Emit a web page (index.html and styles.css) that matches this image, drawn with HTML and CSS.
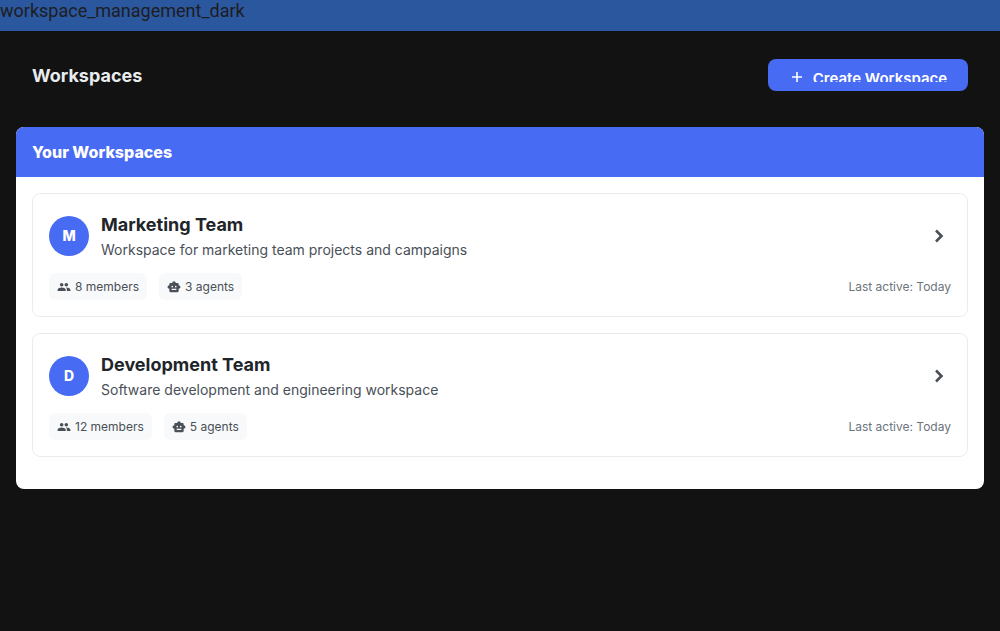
FILE: index.html
```html
<!DOCTYPE html>
<html lang="en">
<head>
<meta charset="utf-8">
<meta name="viewport" content="width=device-width, initial-scale=1">
<title>Workspaces</title>
<link rel="stylesheet" href="styles.css">
</head>
<body>
<svg class="sprite" aria-hidden="true">
  <symbol id="people" viewBox="0 0 24 24"><path d="M16 11c1.66 0 2.99-1.34 2.99-3S17.66 5 16 5c-1.66 0-3 1.34-3 3s1.34 3 3 3zm-8 0c1.66 0 2.99-1.34 2.99-3S9.66 5 8 5C6.34 5 5 6.34 5 8s1.34 3 3 3zm0 2c-2.33 0-7 1.17-7 3.5V19h14v-2.5c0-2.33-4.67-3.5-7-3.5zm8 0c-.29 0-.62.02-.97.05 1.16.84 1.97 1.97 1.97 3.45V19h6v-2.5c0-2.33-4.67-3.5-7-3.5z"/></symbol>
  <symbol id="robot" viewBox="0 0 24 24"><path d="M20 9V7c0-1.1-.9-2-2-2h-3c0-1.66-1.34-3-3-3S9 3.34 9 5H6c-1.1 0-2 .9-2 2v2c-1.66 0-3 1.34-3 3s1.34 3 3 3v4c0 1.1.9 2 2 2h12c1.1 0 2-.9 2-2v-4c1.66 0 3-1.34 3-3s-1.34-3-3-3zM7.5 11.5c0-.83.67-1.5 1.5-1.5s1.5.67 1.5 1.5S9.83 13 9 13s-1.5-.67-1.5-1.5zM16 17H8v-2h8v2zm-1-4c-.83 0-1.500-.67-1.500-1.500S14.170 10 15 10s1.500.67 1.500 1.500S15.830 13 15 13z"/></symbol>
  <symbol id="chevron" viewBox="0 0 24 24"><path d="M9 6.5l5.500 5.500L9 17.500" fill="none" stroke="currentColor" stroke-width="2.600"/></symbol>
  <symbol id="plus" viewBox="0 0 16 16"><path d="M8 3v10M3 8h10" fill="none" stroke="currentColor" stroke-width="1.600"/></symbol>
</svg>
<div class="banner">workspace_management_dark</div>
<main class="page">
  <header class="toolbar">
    <h1 class="toolbar-title">Workspaces</h1>
    <button class="create" type="button"><svg class="create-icon" aria-hidden="true"><use href="#plus"/></svg><span class="create-label">Create Workspace</span></button>
  </header>
  <section class="panel">
    <h2 class="panel-title">Your Workspaces</h2>
    <div class="list">
      <article class="card">
        <div class="card-top">
          <div class="avatar">M</div>
          <div class="info">
            <h3 class="name">Marketing Team</h3>
            <p class="description">Workspace for marketing team projects and campaigns</p>
          </div>
          <button class="open" type="button" aria-label="Open Marketing Team"><svg class="open-icon" aria-hidden="true"><use href="#chevron"/></svg></button>
        </div>
        <div class="card-bottom">
          <span class="chip"><svg class="chip-icon" aria-hidden="true"><use href="#people"/></svg>8 members</span>
          <span class="chip"><svg class="chip-icon" aria-hidden="true"><use href="#robot"/></svg>3 agents</span>
          <span class="activity">Last active: Today</span>
        </div>
      </article>
      <article class="card">
        <div class="card-top">
          <div class="avatar">D</div>
          <div class="info">
            <h3 class="name">Development Team</h3>
            <p class="description">Software development and engineering workspace</p>
          </div>
          <button class="open" type="button" aria-label="Open Development Team"><svg class="open-icon" aria-hidden="true"><use href="#chevron"/></svg></button>
        </div>
        <div class="card-bottom">
          <span class="chip"><svg class="chip-icon" aria-hidden="true"><use href="#people"/></svg>12 members</span>
          <span class="chip"><svg class="chip-icon" aria-hidden="true"><use href="#robot"/></svg>5 agents</span>
          <span class="activity">Last active: Today</span>
        </div>
      </article>
    </div>
  </section>
</main>
</body>
</html>
```
FILE: styles.css
```css
* { box-sizing: border-box; }
body {
  margin: 0;
  min-height: 100vh;
  background: #121212;
  font-family: Inter, "Liberation Sans", sans-serif;
}
h1, h2, h3, p { margin: 0; }
button { border: 0; font: inherit; cursor: pointer; }
.sprite { display: none; }
.banner {
  padding-bottom: 9px;
  background: #2b579f;
  color: #1d1d22;
  font: 400 18px/22px Roboto, sans-serif;
}
.page { padding: 28px 16px 16px; }
.toolbar {
  display: flex;
  align-items: center;
  justify-content: space-between;
  padding: 0 16px;
  margin-bottom: 36px;
}
.toolbar-title {
  padding-top: 2px;
  color: #e9ecef;
  font-size: 18px;
  line-height: 30px;
  font-weight: 700;
}
.create {
  display: flex;
  align-items: center;
  justify-content: center;
  gap: 8px;
  width: 200px;
  height: 32px;
  padding: 4px 0 0;
  border-radius: 8px;
  background: #476bf2;
  color: #fff;
}
.create-icon { width: 16px; height: 16px; }
.create-label {
  height: 12px;
  margin-bottom: 2px;
  overflow: hidden;
  font-size: 15px;
  line-height: 18px;
  font-weight: 600;
}
.panel {
  overflow: hidden;
  border-radius: 8px;
  background: #fff;
}
.panel-title {
  padding: 13px 16px;
  background: #476bf2;
  color: #fff;
  font-size: 16px;
  line-height: 24px;
  font-weight: 800;
}
.list {
  display: grid;
  gap: 16px;
  padding: 16px 16px 32px;
}
.card {
  padding: 16px;
  border: 1px solid #e9ecef;
  border-radius: 8px;
}
.card-top {
  display: flex;
  align-items: center;
  gap: 12px;
  margin-bottom: 12px;
}
.avatar {
  display: grid;
  place-items: center;
  width: 40px;
  height: 40px;
  border-radius: 50%;
  background: #476bf2;
  color: #fff;
  font-size: 14px;
  font-weight: 800;
}
.info { flex: 1; min-width: 0; padding-bottom: 1px; }
.name {
  color: #212529;
  font-size: 18px;
  line-height: 30px;
  font-weight: 700;
}
.description {
  color: #495057;
  font-size: 14px;
  line-height: 20px;
}
.open {
  display: flex;
  padding: 0;
  background: none;
  color: #495057;
}
.open-icon { width: 24px; height: 24px; }
.card-bottom {
  display: flex;
  align-items: center;
  gap: 12px;
}
.chip {
  display: flex;
  align-items: center;
  gap: 4px;
  padding: 4px 8px;
  border-radius: 6px;
  background: #f8f9fa;
  color: #495057;
  font-size: 12px;
  line-height: 19px;
}
.chip-icon { width: 14px; height: 14px; fill: currentColor; }
.activity {
  margin-left: auto;
  color: #6c757d;
  font-size: 12px;
  line-height: 19px;
}
```
